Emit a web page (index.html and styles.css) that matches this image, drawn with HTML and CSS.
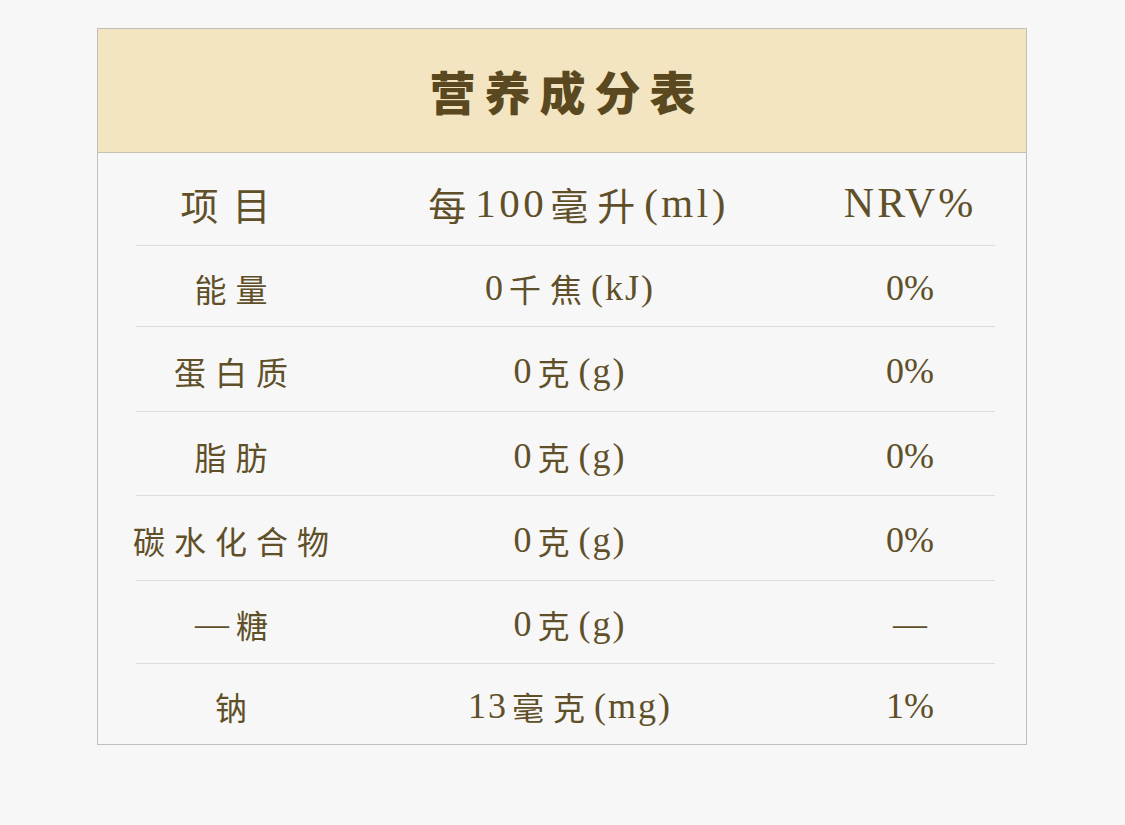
FILE: index.html
```html
<!DOCTYPE html>
<html lang="zh">
<head>
<meta charset="utf-8">
<title>营养成分表</title>
<link rel="stylesheet" href="styles.css">
</head>
<body>
<div class="card">
  <div class="card-head"><h1 class="title">营养成分表</h1></div>
  <div class="table">
    <div class="row row-head">
      <div class="cell c1"><span class="zh">项目</span></div>
      <div class="cell c2"><span class="zh">每</span>100<span class="zh">毫升</span>(ml)</div>
      <div class="cell c3">NRV%</div>
    </div>
    <div class="row r1">
      <div class="cell c1"><span class="zh">能量</span></div>
      <div class="cell c2">0<span class="zh">千焦</span>(kJ)</div>
      <div class="cell c3">0%</div>
    </div>
    <div class="row r2">
      <div class="cell c1"><span class="zh">蛋白质</span></div>
      <div class="cell c2">0<span class="zh">克</span>(g)</div>
      <div class="cell c3">0%</div>
    </div>
    <div class="row r3">
      <div class="cell c1"><span class="zh">脂肪</span></div>
      <div class="cell c2">0<span class="zh">克</span>(g)</div>
      <div class="cell c3">0%</div>
    </div>
    <div class="row r4">
      <div class="cell c1"><span class="zh">碳水化合物</span></div>
      <div class="cell c2">0<span class="zh">克</span>(g)</div>
      <div class="cell c3">0%</div>
    </div>
    <div class="row r5">
      <div class="cell c1"><span class="dash">—</span><span class="zh">糖</span></div>
      <div class="cell c2">0<span class="zh">克</span>(g)</div>
      <div class="cell c3"><span class="dash">—</span></div>
    </div>
    <div class="row r6">
      <div class="cell c1"><span class="zh">钠</span></div>
      <div class="cell c2">13<span class="zh">毫克</span>(mg)</div>
      <div class="cell c3">1%</div>
    </div>
  </div>
</div>
</body>
</html>
```
FILE: styles.css
```css
html, body {
  margin: 0;
  padding: 0;
  background: #f7f7f7;
}
body {
  font-family: "Liberation Serif", "Noto Sans CJK SC", serif;
  color: #5f5029;
  padding: 28px 0 0 97px;
}
.card {
  width: 928px;
  border: 1px solid #c2bebe;
  background: #f7f7f7;
}
.card-head {
  height: 123px;
  background: #f3e5c1;
  border-bottom: 1px solid #c8c2b6;
  display: flex;
  align-items: center;
  justify-content: center;
}
.title {
  margin: 0 0 2px 10px;
  font-family: "Noto Sans CJK SC", sans-serif;
  font-weight: 900;
  font-size: 46px;
  letter-spacing: 9px;
  color: #5a4820;
}
.table {
  padding: 0 31px 0 38px;
}
.row {
  display: grid;
  grid-template-columns: 190px 488px 180px;
  height: 83px;
  box-sizing: border-box;
  padding-top: 4px;
  align-items: center;
  border-top: 1px solid #dcdcdc;
  font-size: 36px;
}
.row-head {
  border-top: none;
  height: 92px;
  padding-top: 8px;
  font-size: 41px;
}
.r1 { height: 81px; }
.r2 { height: 85px; }
.r3 { height: 84px; }
.r4 { height: 85px; }
.r5 { height: 83px; }
.r6 { height: 81px; }
.cell {
  display: flex;
  justify-content: center;
  align-items: center;
  white-space: nowrap;
}
.c2 {
  letter-spacing: 2px;
}
.zh {
  font-family: "Noto Sans CJK SC", sans-serif;
  font-size: 32px;
  letter-spacing: 9px;
  margin: 0 0 0 4px;
}
.row-head .c2 {
  letter-spacing: 3.5px;
  padding-left: 14px;
}
.row-head .zh {
  font-size: 38px;
  letter-spacing: 9px;
  margin-left: 3px;
}
.row-head .c1 .zh {
  letter-spacing: 14px;
  margin-left: 3px;
}
.row-head .c3 {
  font-size: 42px;
  letter-spacing: 3px;
}
.dash {
  font-size: 34px;
  margin: 0 -2px 0 10px;
}
.c1 .zh { margin-left: 9px; }
.c3 {
  padding-left: 12px;
}
.c3 .dash { margin: 0; }
```
